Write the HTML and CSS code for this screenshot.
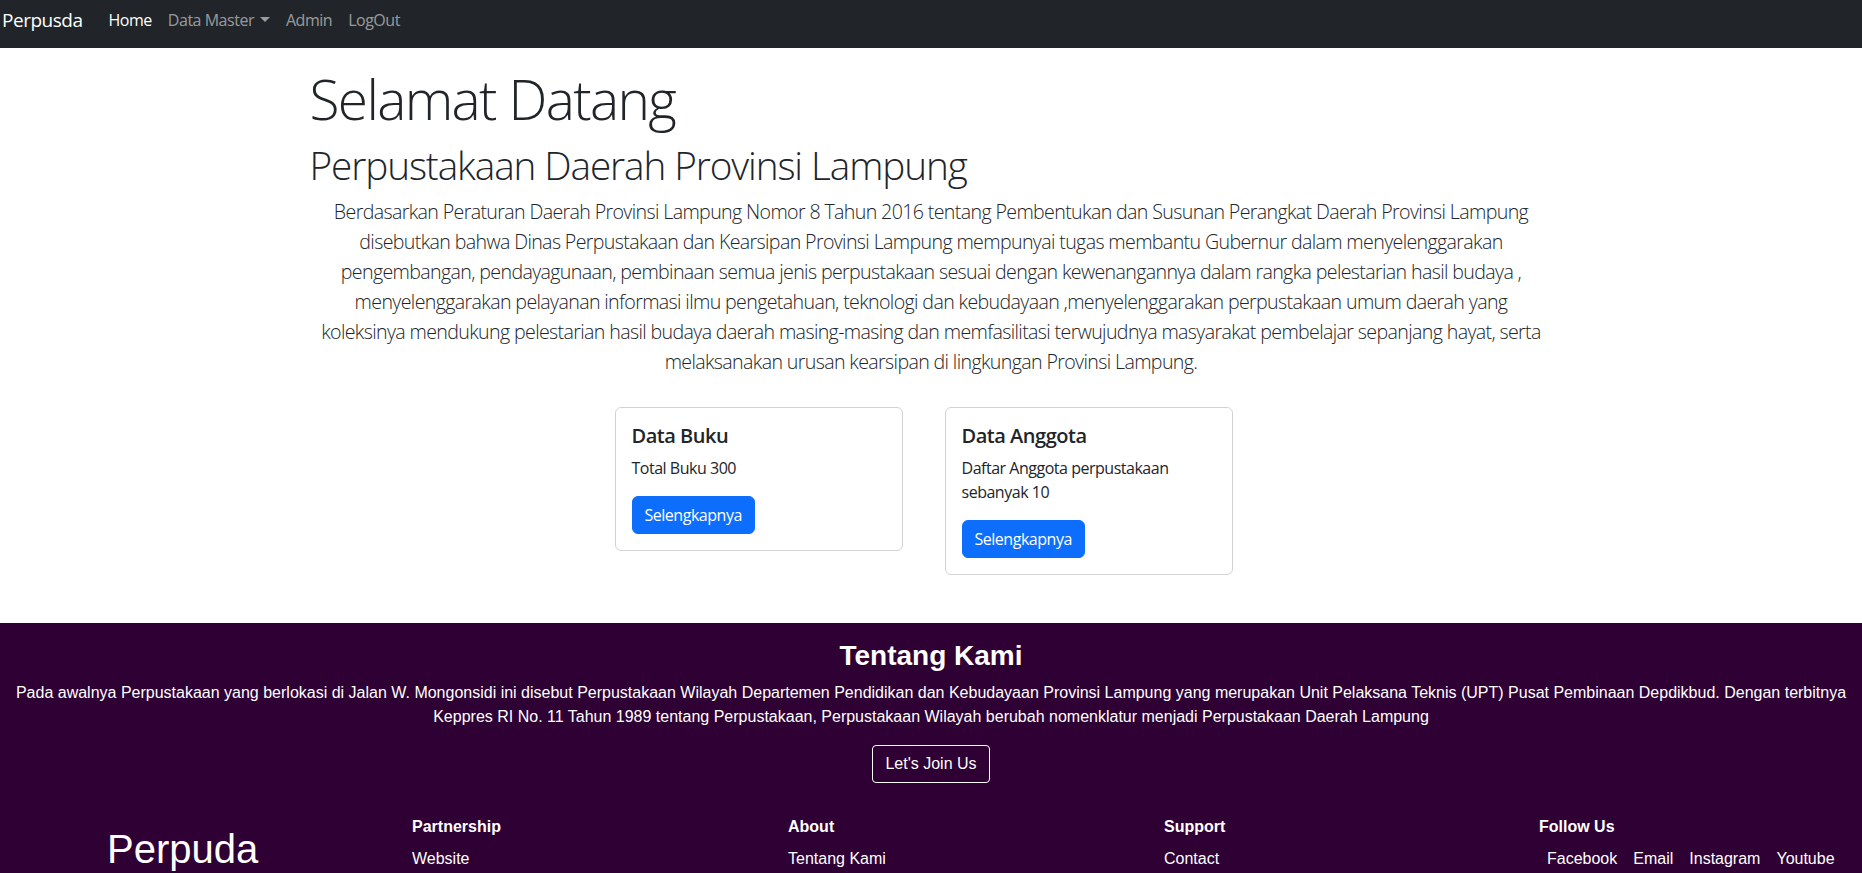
FILE: index.html
```html
<!DOCTYPE html>
<html lang="id">
<head>
<meta charset="utf-8">
<title>Perpusda</title>
<link rel="stylesheet" href="styles.css">
</head>
<body>
<nav class="navbar">
  <a class="brand" href="#">Perpusda</a>
  <ul class="nav">
    <li><a class="nav-link active" href="#">Home</a></li>
    <li><a class="nav-link" href="#">Data Master<span class="caret"></span></a></li>
    <li><a class="nav-link" href="#">Admin</a></li>
    <li><a class="nav-link" href="#">LogOut</a></li>
  </ul>
</nav>

<main class="content">
  <h1 class="display-4">Selamat Datang</h1>
  <h2 class="display-6">Perpustakaan Daerah Provinsi Lampung</h2>
  <p class="lead">Berdasarkan Peraturan Daerah Provinsi Lampung Nomor 8 Tahun 2016 tentang Pembentukan dan Susunan Perangkat Daerah Provinsi Lampung<br>
  disebutkan bahwa Dinas Perpustakaan dan Kearsipan Provinsi Lampung mempunyai tugas membantu Gubernur dalam menyelenggarakan<br>
  pengembangan, pendayagunaan, pembinaan semua jenis perpustakaan sesuai dengan kewenangannya dalam rangka pelestarian hasil budaya ,<br>
  menyelenggarakan pelayanan informasi ilmu pengetahuan, teknologi dan kebudayaan ,menyelenggarakan perpustakaan umum daerah yang<br>
  koleksinya mendukung pelestarian hasil budaya daerah masing-masing dan memfasilitasi terwujudnya masyarakat pembelajar sepanjang hayat, serta<br>
  melaksanakan urusan kearsipan di lingkungan Provinsi Lampung.</p>

  <div class="cards">
    <div class="card">
      <h5 class="card-title">Data Buku</h5>
      <p class="card-text">Total Buku 300</p>
      <a class="btn-primary" href="#">Selengkapnya</a>
    </div>
    <div class="card">
      <h5 class="card-title">Data Anggota</h5>
      <p class="card-text">Daftar Anggota perpustakaan sebanyak 10</p>
      <a class="btn-primary" href="#">Selengkapnya</a>
    </div>
  </div>
</main>

<footer class="footer">
  <section class="about">
    <h3 class="about-title">Tentang Kami</h3>
    <p class="about-text">Pada awalnya Perpustakaan yang berlokasi di Jalan W. Mongonsidi ini disebut Perpustakaan Wilayah Departemen Pendidikan dan Kebudayaan Provinsi Lampung yang merupakan Unit Pelaksana Teknis (UPT) Pusat Pembinaan Depdikbud. Dengan terbitnya Keppres RI No. 11 Tahun 1989 tentang Perpustakaan, Perpustakaan Wilayah berubah nomenklatur menjadi Perpustakaan Daerah Lampung</p>
    <a class="btn-outline" href="#">Let's Join Us</a>
  </section>

  <div class="footer-grid">
    <div class="footer-logo">Perpuda</div>
    <div class="footer-col">
      <h4>Partnership</h4>
      <ul><li><a href="#">Website</a></li></ul>
    </div>
    <div class="footer-col">
      <h4>About</h4>
      <ul><li><a href="#">Tentang Kami</a></li></ul>
    </div>
    <div class="footer-col">
      <h4>Support</h4>
      <ul><li><a href="#">Contact</a></li></ul>
    </div>
    <div class="footer-col">
      <h4>Follow Us</h4>
      <ul class="social">
        <li><a href="#">Facebook</a></li>
        <li><a href="#">Email</a></li>
        <li><a href="#">Instagram</a></li>
        <li><a href="#">Youtube</a></li>
      </ul>
    </div>
  </div>
</footer>
</body>
</html>
```

FILE: styles.css
```css
* { box-sizing: border-box; }

html, body {
  margin: 0;
  padding: 0;
}

body {
  font-family: "Open Sans", "Noto Sans", sans-serif;
  font-size: 16px;
  line-height: 1.5;
  color: #212529;
  background: #fff;
  letter-spacing: -0.03em;
}

a { text-decoration: none; }

/* Navbar */
.navbar {
  height: 48px;
  background: #212529;
  display: flex;
  align-items: flex-start;
  padding: 0 2px;
}

.brand {
  color: #fff;
  font-size: 19px;
  line-height: 30px;
  padding-top: 5px;
  margin-right: 18px;
}

.nav {
  display: flex;
  list-style: none;
  margin: 0;
  padding: 0;
}

.nav-link {
  display: block;
  padding: 8px;
  color: rgba(255, 255, 255, 0.55);
  font-size: 16px;
  line-height: 24px;
}

.nav-link.active { color: #fff; }

.caret {
  display: inline-block;
  margin-left: 6px;
  vertical-align: 4px;
  border-top: 5px solid;
  border-left: 5px solid transparent;
  border-right: 5px solid transparent;
}

/* Main */
.content {
  width: 1243px;
  margin: 0 auto;
  padding: 17px 0 48px;
}

.display-4 {
  margin: 0 0 9px;
  font-size: 55px;
  font-weight: 300;
  line-height: 67px;
  letter-spacing: -0.03em;
}

.display-6 {
  margin: 0 0 8px;
  font-size: 38.7px;
  font-weight: 300;
  line-height: 48px;
  letter-spacing: -0.028em;
}

.lead {
  margin: 0 -40px 30px;
  font-size: 19.6px;
  font-weight: 300;
  line-height: 30px;
  text-align: center;
  letter-spacing: -0.032em;
}

.cards {
  display: flex;
  align-items: flex-start;
  gap: 42px;
  padding-left: 305px;
}

.card {
  width: 288px;
  border: 1px solid rgba(0, 0, 0, 0.175);
  border-radius: 6px;
  padding: 16px;
}

.card-title {
  margin: 0 0 8px;
  font-size: 20px;
  font-weight: 600;
  line-height: 24px;
}

.card-text {
  margin: 0 0 16px;
  font-size: 16px;
  line-height: 24px;
}

.btn-primary {
  display: inline-block;
  background: #0d6efd;
  color: #fff;
  border: 1px solid #0d6efd;
  border-radius: 6px;
  padding: 6px 12px;
  font-size: 16px;
  line-height: 24px;
}

/* Footer */
.footer {
  background: #2e0033;
  color: #fff;
  font-family: "Liberation Sans", Arial, sans-serif;
  letter-spacing: 0;
  padding: 16px 12px 40px;
}

.about {
  text-align: center;
}

.about-title {
  margin: 0 0 8px;
  font-size: 28px;
  font-weight: 700;
  line-height: 1.2;
}

.about-text {
  margin: 0 0 16px;
  font-size: 16px;
  line-height: 24px;
}

.btn-outline {
  display: inline-block;
  color: #fff;
  border: 1px solid #fff;
  border-radius: 4px;
  padding: 6px 12px;
  font-size: 16px;
  line-height: 24px;
}

.footer-grid {
  display: grid;
  grid-template-columns: 412px 376px 376px 375px 1fr;
  margin: 32px -12px 0;
}

.footer-logo {
  padding: 10px 0 0 107px;
  font-size: 40px;
  line-height: 48px;
}

.footer-col h4 {
  margin: 0 0 8px;
  font-size: 16px;
  font-weight: 700;
  line-height: 24px;
}

.footer-col ul {
  list-style: none;
  margin: 0;
  padding: 0;
}

.footer-col a {
  color: #fff;
  font-size: 16px;
  line-height: 24px;
}

.social {
  display: flex;
}

.social a {
  display: block;
  padding: 0 8px;
}
```
